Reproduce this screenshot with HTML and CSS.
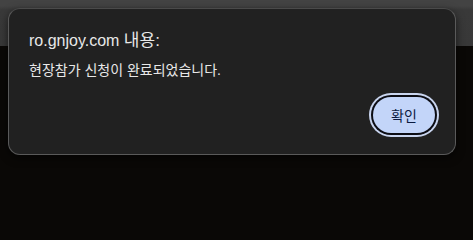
FILE: index.html
```html
<!DOCTYPE html>
<html lang="ko">
<head>
<meta charset="utf-8">
<title>ro.gnjoy.com</title>
<link rel="stylesheet" href="styles.css">
</head>
<body>
<div class="screen">
  <div class="toolbar"></div>
  <div class="page"></div>
  <div class="dialog" role="alertdialog">
    <div class="title">ro.gnjoy.com <span class="ko">내용:</span></div>
    <div class="message">현장참가 신청이 완료되었습니다.</div>
    <div class="actions">
      <button class="ok" type="button">확인</button>
    </div>
  </div>
</div>
</body>
</html>
```
FILE: styles.css
```css
html, body {
  margin: 0;
  padding: 0;
  background: #0a0806;
}
.screen {
  position: relative;
  width: 473px;
  height: 223px;
  display: flex;
  flex-direction: column;
  overflow: hidden;
  font-family: "Liberation Sans", "Noto Sans CJK KR", sans-serif;
}
.toolbar {
  height: 46px;
  background: linear-gradient(#434343 0, #434343 6px, #393939 10px, #383838 100%);
}
.page {
  flex: 1;
  background: #0a0806;
}
.dialog {
  position: absolute;
  left: 8px;
  top: 8px;
  width: 446px;
  height: 145px;
  box-sizing: content-box;
  border: 1px solid #5a5a5a;
  border-top-color: #4a4a4a;
  border-radius: 12px;
  background: #212121;
  box-shadow: 0 3px 8px rgba(0, 0, 0, 0.6);
  padding: 0;
  display: flex;
  flex-direction: column;
}
.title {
  margin: 22px 20px 0 20px;
  font-size: 16px;
  line-height: 20px;
  color: #e8e8e8;
}
.title .ko {
  font-size: 17px;
}
.message {
  margin: 10px 20px 0 20px;
  font-size: 14px;
  line-height: 18px;
  color: #e8e8e8;
}
.actions {
  display: flex;
  justify-content: flex-end;
  padding: 18px 20px 0 20px;
}
.ok {
  width: 62px;
  height: 36px;
  border: none;
  border-radius: 18px;
  background: #c3d5f9;
  color: #0a1a40;
  font-family: "Liberation Sans", "Noto Sans CJK KR", sans-serif;
  font-size: 14px;
  padding: 0;
  box-shadow: 0 0 0 2px #0c0d14, 0 0 0 4px #c9d5ef;
}
```
